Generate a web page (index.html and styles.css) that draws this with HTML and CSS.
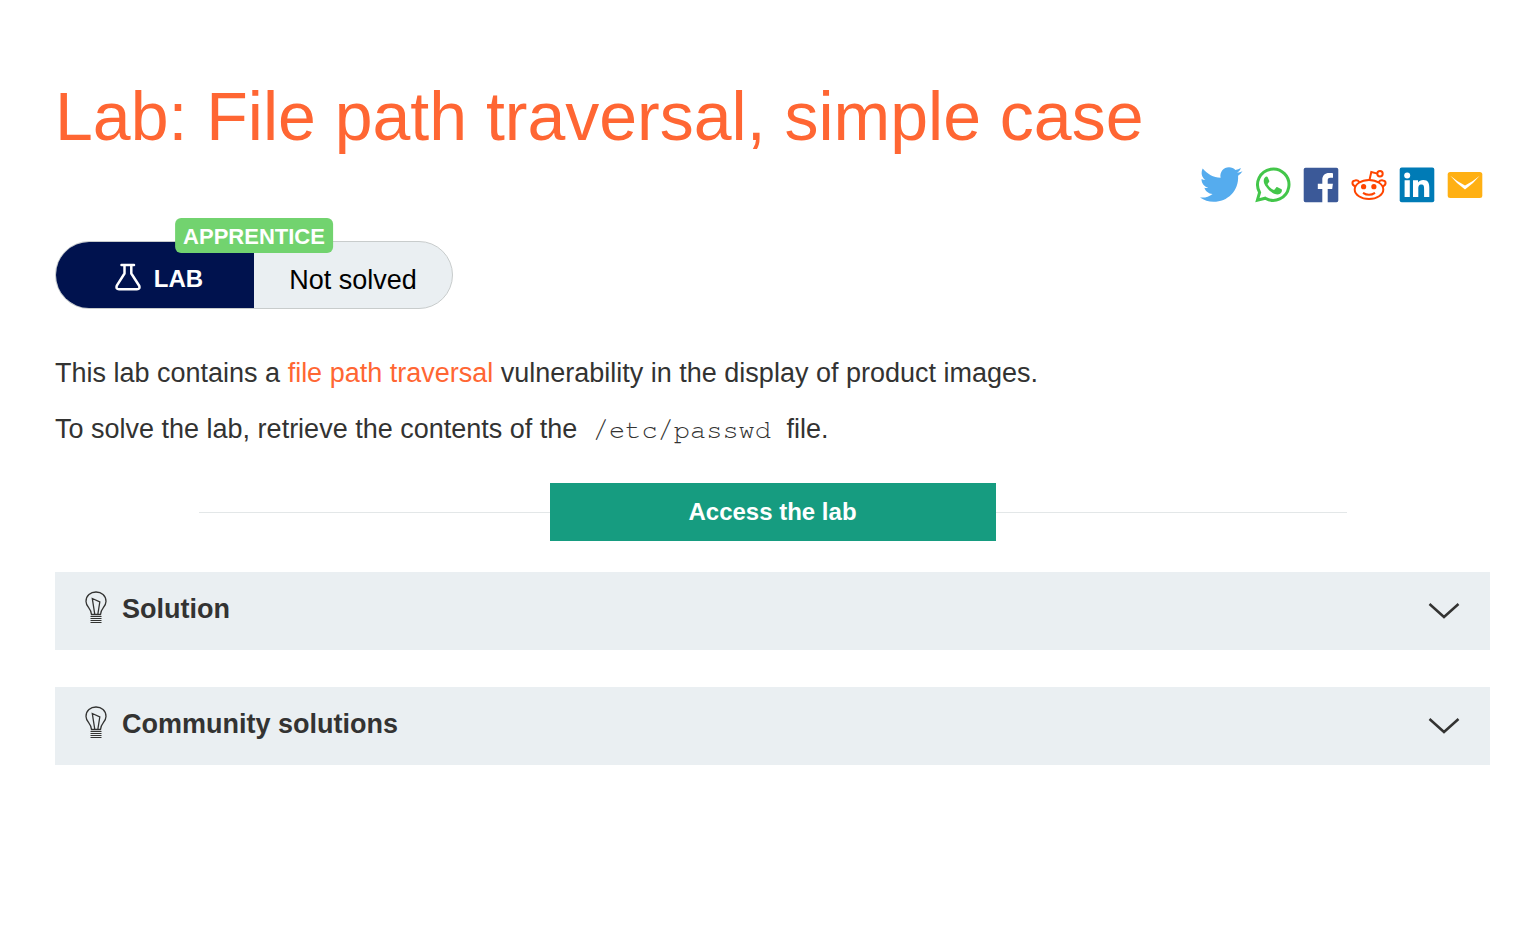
FILE: index.html
```html
<!DOCTYPE html>
<html lang="en">
<head>
<meta charset="utf-8">
<title>Lab: File path traversal, simple case</title>
<link rel="stylesheet" href="styles.css">
</head>
<body>
<main class="page">
  <h1 class="title">Lab: File path traversal, simple case</h1>
  <nav class="share" aria-label="Share">
    <a href="#" aria-label="Twitter"><svg class="share-icon share-wide" viewBox="0 0 43 36"><path fill="#55acee" d="M0 30.500C5 31 9 29.800 12.600 27C8.500 26.800 5.500 24.200 4.400 20.800C5.800 21.100 7 21 8.200 20.700C4 19.700 1.500 16.200 1.500 12C2.700 12.700 4 13 5.400 13.100C1.500 10 .7 5.800 2.700 1.500C7.500 7.300 13.300 10.300 20.600 10.800C19.400 5 23.600.3 29 .3C31.600.3 33.800 1.300 35.400 3C37.400 2.600 39.200 2 40.900 1C40.200 3 39 4.600 37.100 5.700C39 5.500 40.700 5 42.500 4.200C41.300 6 39.800 7.500 38.100 8.700C39 24 27.500 34.800 13.600 34.800C8.500 34.800 4 33.300 0 30.500Z"/></svg></a>
    <a href="#" aria-label="WhatsApp"><svg class="share-icon" viewBox="0 0 36 36"><path fill="none" stroke="#43c64a" stroke-width="3" d="M2.400 33.200L4.600 25.400A15.700 15.700 0 1 1 10.300 31.200Z"/><path fill="#43c64a" d="M11.700 9.500C10.400 9.600 8.700 11.200 8.700 13.900C8.700 16.500 10.600 19 11 19.500C11.300 19.900 14.700 25.200 20 27C23.300 28.200 26 26.500 26.600 25C27.100 23.600 27 22.500 26.600 22.200L22.500 20.200C21.900 20 21.500 20.100 21.200 20.600L19.600 22.600C19.200 23 18.800 22.900 18.300 22.700C15.600 21.500 13.900 19.700 12.700 17.600C12.400 17.100 12.700 16.700 13.100 16.300L14.200 14.800C14.400 14.400 14.300 14.100 14.200 13.700L12.700 10.200C12.500 9.700 12.100 9.500 11.700 9.500Z"/></svg></a>
    <a href="#" aria-label="Facebook"><svg class="share-icon" viewBox="0 0 36 36"><path fill="#3b5998" d="M2.500.7H33.500Q35.300.7 35.300 2.500V33.500Q35.300 35.300 33.500 35.300H24.700V21.900H29.200L29.900 16.700H24.700V13.400C24.700 11.900 25.200 10.800 27.300 10.800H30V6.200C29.500 6.100 27.900 6 26 6C22 6 19.300 8.400 19.300 12.800V16.700H14.800V21.900H19.300V35.300H2.500Q.7 35.300.7 33.500V2.500Q.7.7 2.500.7Z"/></svg></a>
    <a href="#" aria-label="Reddit"><svg class="share-icon" viewBox="0 0 36 36"><g fill="none" stroke="#ff4500" stroke-width="2"><ellipse cx="18" cy="22.500" rx="14.300" ry="9.500"/><path d="M18.500 13L20.300 5L26.500 6.600"/><circle cx="29" cy="6.700" r="2.700"/><path d="M4.200 19.400C.3 17.600.8 14 4 13.500C6 13 7.500 14 8.400 15.200M31.800 19.400C35.700 17.600 35.200 14 32 13.500C30 13 28.500 14 27.600 15.200M12 25.800Q18 29.800 24 25.800"/></g><g fill="#ff4500"><circle cx="12.600" cy="19.700" r="2.600"/><circle cx="22.900" cy="19.700" r="2.600"/></g></svg></a>
    <a href="#" aria-label="LinkedIn"><svg class="share-icon" viewBox="0 0 36 36"><rect x=".7" y=".5" width="34.600" height="34.700" rx="2" fill="#007bb6"/><g fill="#fff"><circle cx="8.200" cy="8.500" r="3"/><path d="M5.600 13.300H10.800V30H5.600ZM14 13.300H19V15.600C20 14 21.900 12.900 24.200 12.900C29.400 12.900 30.300 16.300 30.300 20.800V30H25.100V21.900C25.100 19.900 25.100 17.500 22.400 17.500C19.700 17.500 19.300 19.600 19.300 21.700V30H14Z"/></g></svg></a>
    <a href="#" aria-label="Email"><svg class="share-icon" viewBox="0 0 36 36"><rect x=".7" y="5" width="34.600" height="26" rx="2.500" fill="#ffb013"/><path fill="#fff" d="M3.300 8.700Q10.500 14.800 18 18.600Q25.500 14.800 32.700 8.700Q26.500 16.500 18 22.500Q9.500 16.500 3.300 8.700Z"/></svg></a>
  </nav>

  <div class="status">
    <span class="level">APPRENTICE</span>
    <div class="status-lab">
      <svg class="flask" viewBox="0 0 26 28"><path fill="none" stroke="#fff" stroke-width="2.500" stroke-linecap="round" stroke-linejoin="round" d="M6.500 2H19M9.500 2V10.500L1.800 22.700Q.7 26.200 4 26.200H22Q25.300 26.200 24.200 22.700L16.300 10.500V2"/></svg>
      <span>LAB</span>
    </div>
    <div class="status-result">Not solved</div>
  </div>

  <p class="text">This lab contains a <a class="link" href="#">file path traversal</a> vulnerability in the display of product images.</p>
  <p class="text">To solve the lab, retrieve the contents of the <code class="code">/etc/passwd</code> file.</p>

  <div class="launch"><button class="launch-button" type="button">Access the lab</button></div>

  <details class="panel">
    <summary class="panel-head">
      <svg class="bulb" viewBox="0 0 22 32"><g fill="none" stroke="#333332" stroke-width="1.300"><path d="M6.500 23.500C6.500 17.500 1 16 1 10.500C1 4.500 5.500 1 11 1S21 4.500 21 10.500C21 16 15.500 17.500 15.500 23.500ZM9.800 23.500L7.300 7.500L14.800 11L12.800 23.500"/><path stroke-width="1" d="M5.500 25.500H16.500M5.500 27.500H16.500M5.500 29.500H16.500M5.500 31.500H16.500"/></g></svg>
      <span class="panel-name">Solution</span>
      <svg class="chevron" viewBox="0 0 32 18"><path d="M1.500 2L16 15L30.500 2" fill="none" stroke="#333332" stroke-width="2.500"/></svg>
    </summary>
  </details>
  <details class="panel">
    <summary class="panel-head">
      <svg class="bulb" viewBox="0 0 22 32"><g fill="none" stroke="#333332" stroke-width="1.300"><path d="M6.500 23.500C6.500 17.500 1 16 1 10.500C1 4.500 5.500 1 11 1S21 4.500 21 10.500C21 16 15.500 17.500 15.500 23.500ZM9.800 23.500L7.300 7.500L14.800 11L12.800 23.500"/><path stroke-width="1" d="M5.500 25.500H16.500M5.500 27.500H16.500M5.500 29.500H16.500M5.500 31.500H16.500"/></g></svg>
      <span class="panel-name">Community solutions</span>
      <svg class="chevron" viewBox="0 0 32 18"><path d="M1.500 2L16 15L30.500 2" fill="none" stroke="#333332" stroke-width="2.500"/></svg>
    </summary>
  </details>
</main>
</body>
</html>
```
FILE: styles.css
```css
* { box-sizing: border-box; }
body {
  margin: 0;
  background: #fff;
  color: #333332;
  font-family: "Liberation Sans", Arial, sans-serif;
  font-size: 27px;
  line-height: 32px;
}
.page { padding: 76px 48px 48px 55px; }
.title {
  margin: 0;
  color: #ff6633;
  font-size: 68px;
  font-weight: 400;
  line-height: 80px;
}
.share {
  display: flex;
  justify-content: flex-end;
  gap: 12px;
  margin-top: 11px;
  padding-right: 7px;
}
.share-icon { display: block; width: 36px; height: 36px; }
.share-wide { width: 43px; }
.status {
  position: relative;
  display: flex;
  width: 398px;
  height: 68px;
  margin-top: 38px;
  border: 1px solid #c8cccc;
  border-radius: 34px;
  background: #eaeff2;
}
.level {
  position: absolute;
  top: -24px;
  left: 50%;
  transform: translateX(-50%);
  padding: 3px 8px 0;
  height: 35px;
  border-radius: 6px;
  background: #72d36f;
  color: #fff;
  font-size: 22px;
  font-weight: 700;
}
.status-lab, .status-result {
  display: flex;
  width: 50%;
  align-items: center;
  justify-content: center;
}
.status-lab {
  gap: 13px;
  padding: 8px 0 0 8px;
  border-radius: 33px 0 0 33px;
  background: #00124e;
  color: #fff;
  font-size: 24px;
  font-weight: 700;
}
.flask { width: 26px; height: 28px; margin-top: -4px; }
.status-result { padding-top: 10px; color: #000; }
.text { margin: 24px 0 0; }
.status + .text { margin-top: 48px; }
.link { color: #ff6633; text-decoration: none; }
.code {
  padding: 0 8px;
  font-family: "Courier 10 Pitch", "Nimbus Mono PS", FreeMono, Courier, "Liberation Mono", monospace;
  font-size: 27px;
}
.launch {
  display: flex;
  align-items: center;
  margin: 37px 10% 0;
}
.launch::before, .launch::after {
  content: "";
  flex: 1;
  height: 1px;
  background: #e3e7e8;
}
.launch-button {
  width: 446px;
  height: 58px;
  border: 0;
  background: #169c80;
  color: #fff;
  font: 700 24px/32px "Liberation Sans", Arial, sans-serif;
}
.panel { margin-top: 31px; background: #eaeff2; }
.panel + .panel { margin-top: 37px; }
.panel-head {
  display: flex;
  align-items: center;
  gap: 15px;
  height: 78px;
  padding: 0 30px 4px;
  font-weight: 700;
  list-style: none;
  cursor: pointer;
}
.bulb { width: 22px; height: 32px; margin-bottom: 4px; }
.panel-name { flex: 1; }
.chevron { width: 32px; height: 18px; margin-top: 4px; }
```
